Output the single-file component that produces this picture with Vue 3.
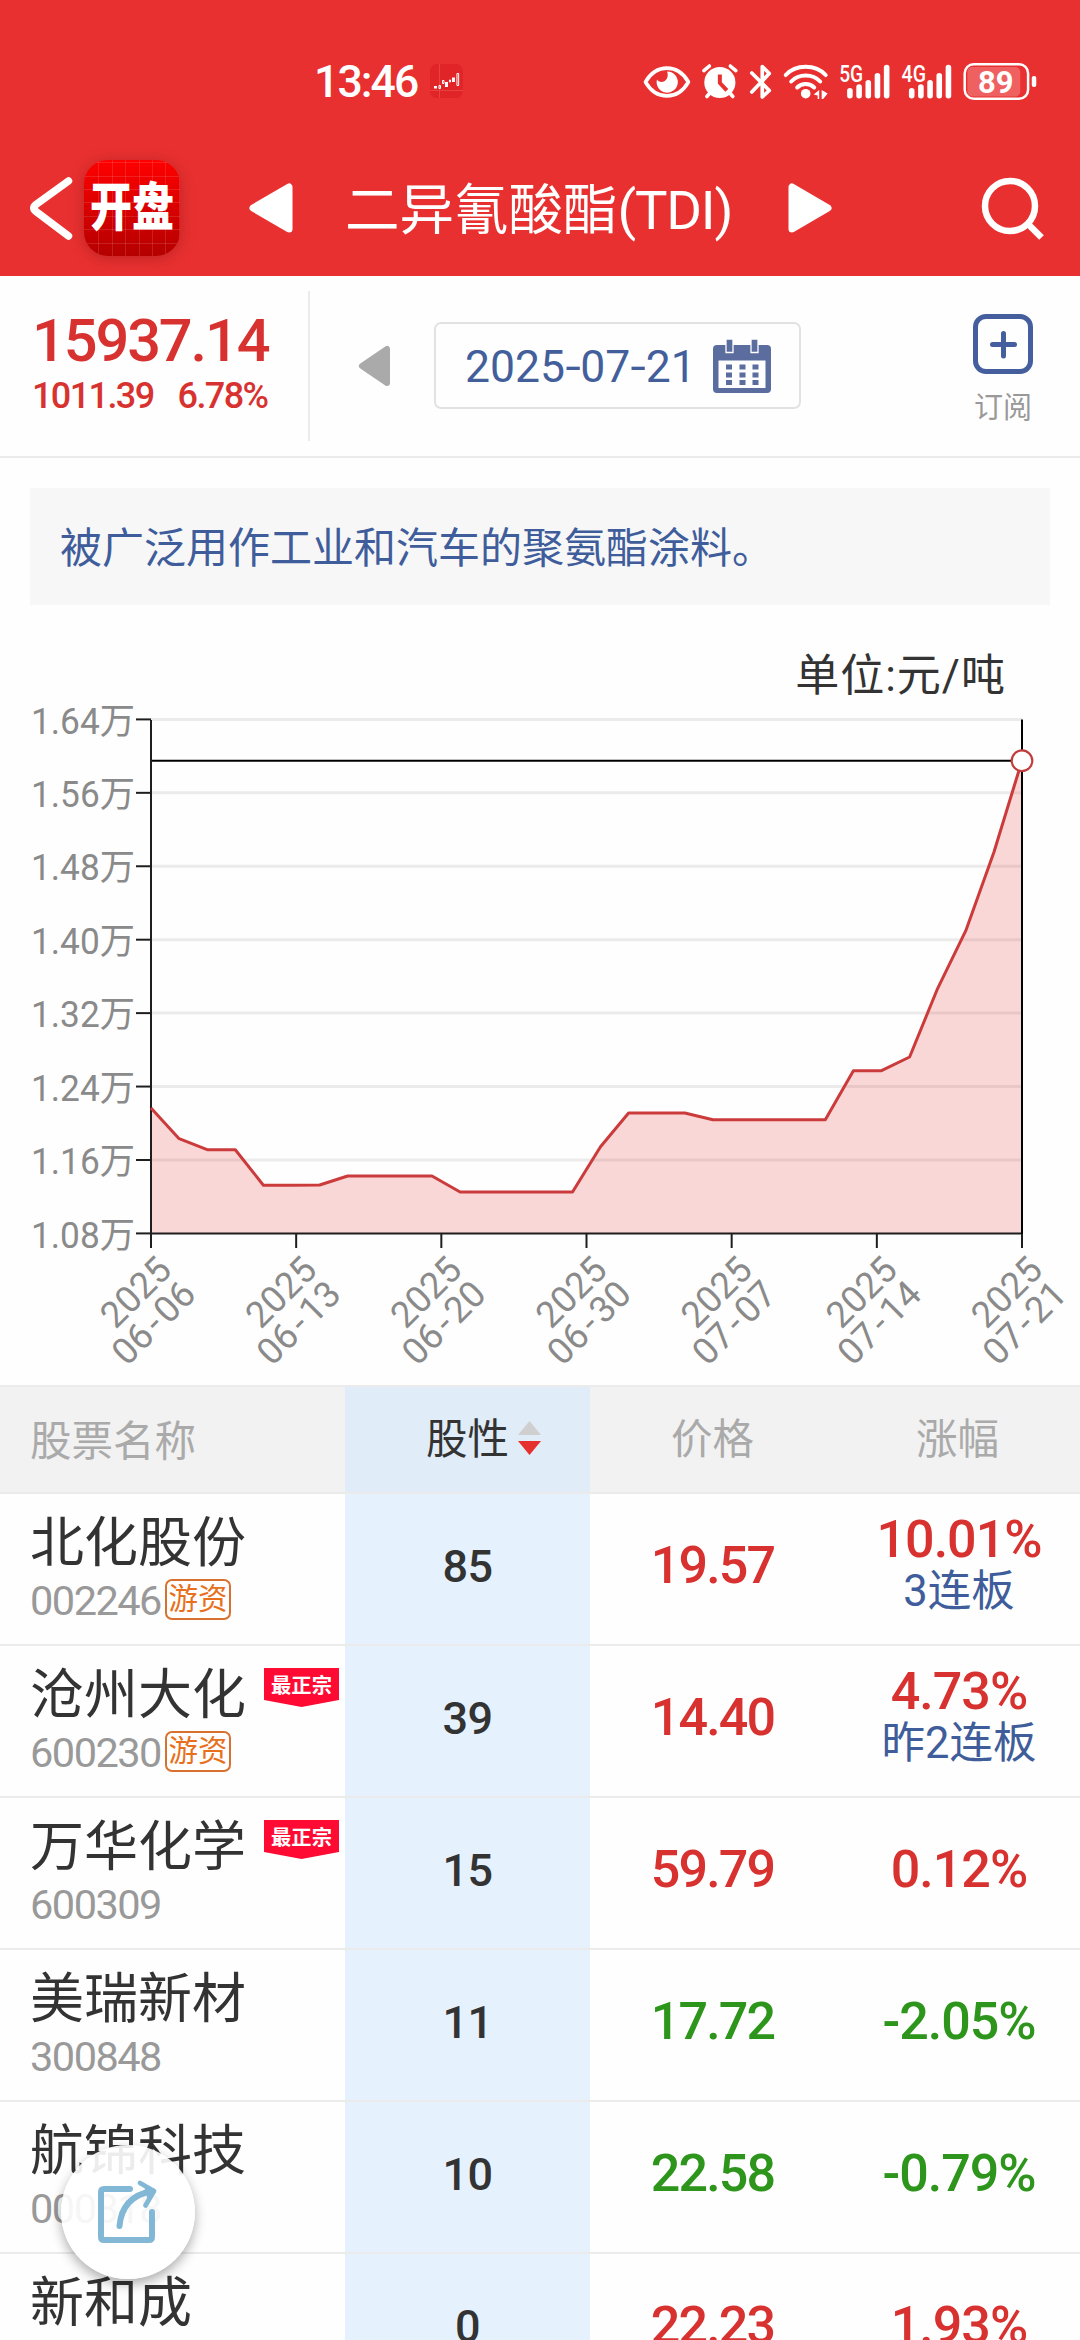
<script setup>
const axis = { left: 151, right: 1022, top: 719.4, step: 73.43 }
const yLabels = ['1.64万', '1.56万', '1.48万', '1.40万', '1.32万', '1.24万', '1.16万', '1.08万']
const xLabels = ['06-06', '06-13', '06-20', '06-30', '07-07', '07-14', '07-21']
const series = [
  1108, 1138.7, 1149.7, 1149.7, 1185.3, 1185.3, 1185, 1176, 1176, 1176, 1176,
  1192, 1192, 1192, 1192, 1192, 1146.7, 1113, 1113, 1113, 1119.7, 1119.7,
  1119.7, 1119.7, 1119.7, 1070.7, 1070.7, 1057, 988.3, 930.7, 852.3, 760.7
]
const linePoints = series
  .map((y, i) => `${(axis.left + (i * (axis.right - axis.left)) / 31).toFixed(1)},${y}`)
  .join(' ')
const areaPoints = `${axis.left},1233.4 ${linePoints} ${axis.right},1233.4`
const gridY = (i) => axis.top + i * axis.step
const tickX = (i) => axis.left + (i * (axis.right - axis.left)) / 6

const stocks = [
  { name: '北化股份', code: '002246', hot: true, score: 85, price: '19.57', change: '10.01%', note: '3连板', dir: 'up' },
  { name: '沧州大化', code: '600230', hot: true, best: true, score: 39, price: '14.40', change: '4.73%', note: '昨2连板', dir: 'up' },
  { name: '万华化学', code: '600309', best: true, score: 15, price: '59.79', change: '0.12%', dir: 'up' },
  { name: '美瑞新材', code: '300848', score: 11, price: '17.72', change: '-2.05%', dir: 'down' },
  { name: '航锦科技', code: '000818', score: 10, price: '22.58', change: '-0.79%', dir: 'down' },
  { name: '新和成', code: '', score: 0, price: '22.23', change: '1.93%', dir: 'up' }
]
const bars = [[0, 87], [9.2, 83.3], [18.4, 79], [27.6, 72], [36.8, 63.7]]
</script>

<template>
  <div class="page">
    <header class="top">
      <div class="status">
        <span class="clock">13:46</span>
        <svg class="mini" width="33" height="34" viewBox="0 0 33 34">
          <rect width="33" height="34" rx="7" fill="#e02427" />
          <path d="M9.500 0V34M0 26.500H33" stroke="#ea4240" stroke-width="1" />
          <path d="M4 22h3v2.500H4zM15 18h3v5h-3zM22 13.500h3v4.500h-3z" fill="#fff" />
          <path d="M9 21.500h1.500v3H9zM12.500 16.500h1.500v3h-1.500zM19.500 16h1v2h-1zM27 9.500h1.700v12H27z" fill="none" stroke="#fff" stroke-width="1" />
        </svg>
        <svg class="icons" width="400" height="44" viewBox="640 58 400 44" fill="none" stroke="#fff" stroke-linecap="round" stroke-linejoin="round">
          <path d="M644.500 81C655 62.500 677 62.500 687.500 81C677 99.500 655 99.500 644.500 81Z" stroke-width="3.600" />
          <path d="M666 70.500A10.600 10.600 0 1 1 656 78.500C658 82 663.500 82 666 77.500C667.200 75 667 72.500 666 70.500Z" fill="#fff" stroke="none" />
          <circle cx="719" cy="81.500" r="15.600" fill="#fff" stroke="none" />
          <path d="M703 69.500L708.500 65M735 69.500L729.500 65M709 92L706 95.500M729 92L732 95.500" stroke-width="3.600" />
          <path d="M719 73.500V82L726 89.500" stroke="#e83030" stroke-width="4" stroke-linecap="butt" />
          <path d="M751 72L768.500 89.500L761.500 96V65.500L768.500 72.500L751 91" stroke-width="3.700" />
          <path d="M785 74C795 63 815 63 825 74M790.500 80.500C798 72.500 812 72.500 819.500 80.500M796.500 86.500C801 82 809 82 813.500 86.500" stroke-width="4" />
          <circle cx="805" cy="92.700" r="4.800" fill="#fff" stroke="none" />
          <path d="M813 93.500L818.500 89V98H817V94.500ZM821 89L827 92.500L822.500 98H821Z" fill="#fff" stroke="none" />
          <g stroke-width="5.600">
            <path v-for="b in bars" :key="'a' + b[0]" :d="`M${849.3 + b[0]} ${b[1] + 2.800}V94.700`" />
            <path v-for="b in bars" :key="'b' + b[0]" :d="`M${911.2 + b[0]} ${b[1] + 2.800}V94.700`" />
          </g>
          <g class="net" stroke="none" fill="#fff">
            <text x="838.500" y="81" textLength="24" lengthAdjust="spacingAndGlyphs">5G</text>
            <text x="901" y="81" textLength="24.500" lengthAdjust="spacingAndGlyphs">4G</text>
          </g>
          <rect x="967" y="66" width="53" height="29.500" rx="5" fill="#ef6161" stroke="none" />
          <rect x="964.300" y="63.300" width="63.500" height="34.500" rx="9" stroke-width="2.500" />
          <rect x="1031.500" y="75" width="4.500" height="11" rx="2" fill="#fff" stroke="none" />
          <text class="batt" x="995.500" y="92.300" text-anchor="middle" stroke="none" fill="#fff">89</text>
        </svg>
      </div>
      <nav class="nav">
        <svg class="back" width="46" height="68" viewBox="28 174 46 68" fill="none" stroke="#fff" stroke-width="7.500" stroke-linecap="round" stroke-linejoin="round">
          <path d="M68.500 181L36 204.500Q31.500 208 36 211.500L68.500 236" />
        </svg>
        <div class="app"><span>开盘</span></div>
        <svg class="tri prev" width="45" height="50" viewBox="0 0 45 50"><path d="M4 25L40 4V46Z" /></svg>
        <h1>二异氰酸酯<span>(TDI)</span></h1>
        <svg class="tri next" width="45" height="50" viewBox="0 0 45 50"><path d="M41 25L5 4V46Z" /></svg>
        <svg class="search" width="66" height="66" viewBox="978 174 66 66" fill="none" stroke="#fff" stroke-width="6.500">
          <circle cx="1009" cy="205" r="25" /><path d="M1027.500 223.500L1040.500 236.500" />
        </svg>
      </nav>
    </header>

    <section class="quote">
      <div class="price">
        <div class="big">15937.14</div>
        <div class="small"><span>1011.39</span><span>6.78%</span></div>
      </div>
      <svg class="day-prev" width="33" height="42" viewBox="0 0 33 42"><path d="M4 21L29 4V38Z" /></svg>
      <div class="date">
        <span>2025<i>-</i>07<i>-</i>21</span>
        <svg width="58" height="54" viewBox="0 0 58 54">
          <path d="M4 6H54Q58 6 58 10V50Q58 54 54 54H4Q0 54 0 50V10Q0 6 4 6ZM5.500 21.500V49H52.500V21.500Z" fill="#5b6c9f" fill-rule="evenodd" />
          <path d="M13 0H20V13.500H13ZM38 0H45V13.500H38Z" fill="#5b6c9f" stroke="#fff" stroke-width="1.300" />
          <path d="M13 25.500h6v5h-6zM26.500 25.500h6v5h-6zM39.500 25.500h6v5h-6zM13 33.500h6v5h-6zM26.500 33.500h6v5h-6zM39.500 33.500h6v5h-6zM13 41h6v5h-6zM26.500 41h6v5h-6zM39.500 41h6v5h-6z" fill="#5b6c9f" />
        </svg>
      </div>
      <div class="sub">
        <svg width="60" height="60" viewBox="0 0 60 60" fill="none" stroke="#455f9e" stroke-width="5" stroke-linecap="round">
          <rect x="2.500" y="2.500" width="55" height="55" rx="10.500" /><path d="M19.500 30.500H41.500M30.500 19.500V42" />
        </svg>
        <span>订阅</span>
      </div>
    </section>

    <div class="intro">被广泛用作工业和汽车的聚氨酯涂料。</div>
    <div class="unit">单位:元/吨</div>

    <svg class="chart" width="1080" height="675" viewBox="0 710 1080 675">
      <g stroke="#ebebeb" stroke-width="3">
        <path v-for="i in 7" :key="i" :d="`M151 ${gridY(i - 1)}H1022`" />
      </g>
      <polygon :points="areaPoints" fill="#e83030" fill-opacity=".19" />
      <g stroke="#1e1e1e" stroke-width="2">
        <path v-for="i in 8" :key="i" :d="`M136 ${gridY(i - 1)}H151`" />
        <path v-for="i in 7" :key="'x' + i" :d="`M${tickX(i - 1)} 1233V1248`" />
        <path d="M151 720V1234M151 1233.400H1022" />
      </g>
      <polyline :points="linePoints" fill="none" stroke="#cb3b3b" stroke-width="3" stroke-linejoin="round" />
      <path d="M152 760.700H1022M1022 719.400V1234" stroke="#000" stroke-width="2" />
      <circle cx="1022" cy="760.700" r="10.300" fill="#fff" stroke="#c23c3c" stroke-width="2.200" />
      <g class="axis-text">
        <text v-for="(t, i) in yLabels" :key="t" x="31" :y="gridY(i) + 14.200" textLength="104" lengthAdjust="spacingAndGlyphs">{{ t }}</text>
        <g v-for="(t, i) in xLabels" :key="t" :transform="`translate(${tickX(i) + 22.500} 1272) rotate(-45)`" text-anchor="end">
          <text>2025</text>
          <text y="34.300" dx="0 0 4 4">{{ t }}</text>
        </g>
      </g>
    </svg>

    <section class="table">
      <div class="row head">
        <div class="c-name">股票名称</div>
        <div class="c-score">
          <span class="sort">股性
            <svg width="23" height="36" viewBox="0 0 23 36"><path d="M11.500 1L23 15H0Z" fill="#cfcfcf" /><path d="M0 21H23L11.500 35Z" fill="#e63030" /></svg>
          </span>
        </div>
        <div class="c-num">价格</div>
        <div class="c-num">涨幅</div>
      </div>
      <div v-for="s in stocks" :key="s.name" class="row">
        <div class="c-name">
          <div class="name">{{ s.name }}
            <span v-if="s.best" class="best">最正宗</span>
          </div>
          <div class="code">{{ s.code }}<span v-if="s.hot" class="hot">游资</span></div>
        </div>
        <div class="c-score">{{ s.score }}</div>
        <div class="c-num cost" :class="s.dir">{{ s.price }}</div>
        <div class="c-num change" :class="s.dir">
          <span>{{ s.change }}</span>
          <span v-if="s.note" class="note">{{ s.note }}</span>
        </div>
      </div>
    </section>

    <div class="share">
      <svg width="66" height="66" viewBox="95 2180 66 66" fill="none" stroke="#82b8d6" stroke-width="6" stroke-linecap="round" stroke-linejoin="round">
        <path d="M130 2190H104Q101 2190 101 2193V2238Q101 2241 104 2241H149Q152 2241 152 2238V2213" />
        <path d="M119.500 2227C121 2209 131 2196 152 2192" />
        <path d="M140 2184L154 2192L145.500 2206.500" stroke-width="4.800" />
        <path d="M144 2187L154 2192L148 2202Z" fill="#82b8d6" stroke="none" />
      </svg>
    </div>
  </div>
</template>

<style>
body {
  margin: 0;
  background: #fff;
}
</style>

<style scoped>
.page {
  position: relative;
  width: 1080px;
  height: 2340px;
  overflow: hidden;
  background: #fefefe;
  color: #333;
  font-family: Roboto, "Noto Sans CJK SC", sans-serif;
}
.top {
  box-sizing: border-box;
  height: 276px;
  background: #e83030;
  color: #fff;
}
.status {
  display: flex;
  align-items: center;
  height: 162px;
  padding: 0 40px 0 314px;
}
.clock {
  width: 116px;
  padding-top: 2px;
  font-size: 44.500px;
  font-weight: 500;
  letter-spacing: -1.900px;
  line-height: 50px;
}
.icons {
  margin-left: 178px;
}
.net {
  font-size: 23.500px;
  font-weight: 500;
}
.batt {
  font-size: 31px;
  font-weight: 700;
}
.nav {
  display: flex;
  align-items: center;
  height: 92px;
}
.back {
  flex: none;
  margin-left: 28px;
}
.app {
  display: flex;
  flex: none;
  align-items: center;
  justify-content: center;
  width: 96px;
  height: 96px;
  margin-left: 10px;
  border-radius: 24px;
  background:
    repeating-linear-gradient(90deg, transparent 0 12.400px, rgba(255, 255, 255, .12) 12.400px 13.400px) 2px 0,
    repeating-linear-gradient(0deg, transparent 0 12.400px, rgba(255, 255, 255, .12) 12.400px 13.400px),
    linear-gradient(#ff0000, #b40000);
  box-shadow: 0 2px 14px rgba(130, 20, 20, .4);
}
.app span {
  font-size: 42px;
  font-weight: 900;
  line-height: 50px;
  transform: scaleY(1.250);
}
.tri {
  flex: none;
  fill: #fff;
  stroke: #fff;
  stroke-width: 7px;
  stroke-linejoin: round;
}
.prev {
  margin-left: 69px;
}
h1 {
  width: 388px;
  margin: 3px 0 0 51px;
  font-size: 54.500px;
  font-weight: 400;
  line-height: 70px;
  white-space: nowrap;
}
h1 span {
  letter-spacing: -1.200px;
}
.next {
  margin-left: 54px;
}
.search {
  flex: none;
  margin-left: 147px;
}
.quote {
  display: flex;
  box-sizing: border-box;
  height: 182px;
  padding-top: 15px;
  border-bottom: 2px solid #ebebeb;
}
.price {
  box-sizing: border-box;
  width: 310px;
  height: 150px;
  padding: 20px 0 0 32px;
  border-right: 2px solid #ebebeb;
  color: #d83230;
  font-weight: 500;
}
.big {
  font-size: 59.500px;
  line-height: 60px;
  letter-spacing: -2.100px;
}
.small {
  display: flex;
  gap: 24px;
  font-size: 36px;
  line-height: 50px;
  letter-spacing: -1.600px;
}
.day-prev {
  margin: 54px 0 0 48px;
  fill: #aaa;
  stroke: #aaa;
  stroke-width: 6px;
  stroke-linejoin: round;
}
.date {
  display: flex;
  box-sizing: border-box;
  align-items: center;
  width: 367px;
  height: 87px;
  margin: 31px 0 0 43px;
  padding-left: 29px;
  border: 2px solid #e2e2e2;
  border-radius: 7px;
  color: #435f9b;
  font-size: 44.500px;
}
.date span {
  width: 248px;
  padding-top: 2px;
}
.date i {
  display: inline-block;
  margin: 0 1.500px;
  font-style: normal;
  transform: scaleX(1.250);
}
.sub {
  display: flex;
  flex-direction: column;
  align-items: center;
  margin: 23px 0 0 172px;
  color: #999;
  font-size: 29px;
  line-height: 34px;
}
.sub span {
  margin-top: 17px;
}
.intro {
  height: 117px;
  margin: 30px 30px 0;
  padding-left: 30px;
  background: #f7f7f8;
  color: #405d9b;
  font-size: 42px;
  line-height: 121px;
}
.unit {
  height: 105px;
  padding-right: 74px;
  font-size: 44px;
  letter-spacing: 1px;
  line-height: 143px;
  text-align: right;
}
.chart {
  display: block;
  overflow: visible;
}
.axis-text {
  fill: #8a8a8a;
  font-size: 36.500px;
}
.table {
  border-top: 2px solid #ebebeb;
}
.row {
  display: flex;
  box-sizing: border-box;
  height: 152px;
  border-bottom: 2px solid #ebebeb;
}
.row > div {
  box-sizing: border-box;
}
.c-name {
  width: 345px;
  padding-left: 30px;
}
.c-score,
.c-num {
  display: flex;
  flex-direction: column;
  align-items: center;
  justify-content: center;
  width: 245px;
  padding-bottom: 6px;
}
.c-score {
  background: #e5f2fe;
  font-size: 45px;
  font-weight: 500;
  letter-spacing: -.6px;
}
.c-num {
  padding-bottom: 6px;
  font-size: 52px;
  font-weight: 500;
  line-height: 52px;
  letter-spacing: -1px;
}
.cost {
  letter-spacing: -1.800px;
}
.change {
  padding-left: 3px;
}
.name {
  position: relative;
  height: 80px;
  font-size: 54px;
  line-height: 99px;
}
.code {
  display: flex;
  align-items: center;
  height: 53px;
  color: #999;
  font-size: 41.500px;
  letter-spacing: -1.500px;
}
.hot {
  box-sizing: border-box;
  width: 66px;
  height: 41px;
  margin: -3px 0 0 4px;
  border: 2px solid #d8712f;
  border-radius: 7px;
  color: #e8701c;
  font-size: 29.500px;
  line-height: 37px;
  letter-spacing: 0;
  text-align: center;
}
.best {
  position: absolute;
  top: 22px;
  left: 234px;
  width: 75px;
  height: 39px;
  background: #ff0a33;
  clip-path: polygon(0 0, 100% 0, 100% 82%, 50% 100%, 0 82%);
  color: #fff;
  font-size: 20.300px;
  font-weight: 700;
  line-height: 37px;
  text-align: center;
}
.note {
  color: #405d9b;
  font-size: 43.500px;
  font-weight: 400;
  letter-spacing: 0;
}
.up {
  color: #d83230;
}
.down {
  color: #2d951b;
}
.head {
  height: 107px;
  background: #f2f2f2;
  color: #aaa;
}
.head > div {
  padding-bottom: 0;
  font-size: 41.500px;
  font-weight: 400;
  line-height: 110px;
  letter-spacing: 0;
}
.head .c-score {
  background: #e0ecf8;
  color: #333;
}
.sort {
  position: relative;
}
.sort svg {
  position: absolute;
  top: 35px;
  left: 92px;
}
.share {
  position: absolute;
  top: 2145px;
  left: 61px;
  display: flex;
  align-items: center;
  justify-content: center;
  width: 134px;
  height: 134px;
  border-radius: 50%;
  background: rgba(255, 255, 255, .91);
  box-shadow: 0 5px 12px rgba(0, 0, 0, .32);
}
</style>
